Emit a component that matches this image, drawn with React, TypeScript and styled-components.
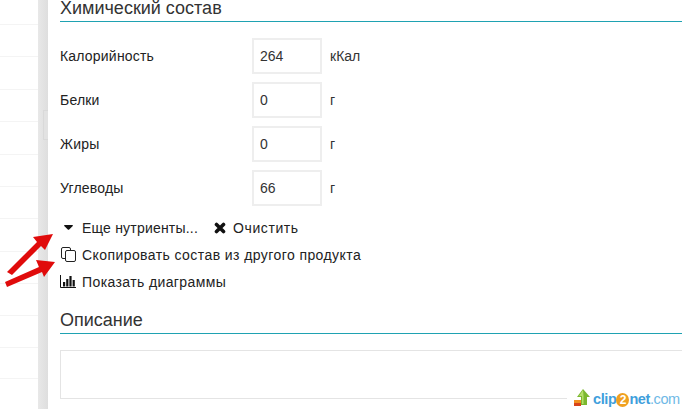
import React from 'react';
import styled, { createGlobalStyle } from 'styled-components';

const GlobalStyle = createGlobalStyle`
  html, body {
    margin: 0;
    padding: 0;
    background: #fff;
    overflow: hidden;
  }
  * { box-sizing: border-box; }
`;

const nutrients = [
  { label: 'Калорийность', value: '264', unit: 'кКал' },
  { label: 'Белки', value: '0', unit: 'г' },
  { label: 'Жиры', value: '0', unit: 'г' },
  { label: 'Углеводы', value: '66', unit: 'г' },
];

const sidebarRows = [25, 32, 33, 32, 33, 32, 32, 33, 32, 32, 32, 31];

const App = () => (
  <Page>
    <GlobalStyle />
    <Sidebar>
      {sidebarRows.map((height, i) => (
        <SidebarRow key={i} $height={height} />
      ))}
    </Sidebar>
    <Splitter>
      <Grip />
    </Splitter>
    <Main>
      <Heading>Химический состав</Heading>
      <Fields>
        {nutrients.map((n) => (
          <FieldRow key={n.label}>
            <FieldLabel>{n.label}</FieldLabel>
            <FieldInput readOnly value={n.value} />
            <Unit>{n.unit}</Unit>
          </FieldRow>
        ))}
      </Fields>
      <Actions>
        <ActionRow>
          <Action $tracking={0.2}>
            <IconSlot $width={22} $offset={4}>
              <svg width="9" height="5" viewBox="0 0 9 5">
                <path d="M0 0.5 Q0 0 1 0 H8 Q9 0 9 0.5 Q9 1 8 1.8 L5.2 4.6 Q4.5 5 3.8 4.6 L1 1.8 Q0 1 0 0.5Z" fill="#111" />
              </svg>
            </IconSlot>
            Еще нутриенты...
          </Action>
          <Action $tracking={0.6} $indent={16}>
            <IconSlot $width={19}>
              <svg width="12" height="12" viewBox="0 0 12 12">
                <path d="M2.5 2.5 L9.5 9.5 M9.5 2.5 L2.5 9.5" stroke="#111" strokeWidth="3.6" strokeLinecap="round" />
              </svg>
            </IconSlot>
            Очистить
          </Action>
        </ActionRow>
        <Action $tracking={0.42}>
          <IconSlot $width={22} $offset={1}>
            <svg width="15" height="15" viewBox="0 0 15 15" fill="none" stroke="#222" strokeWidth="1">
              <path d="M4.5 11.5 H2 Q0.5 11.5 0.5 10 V2 Q0.5 0.5 2 0.5 H8 Q9.5 0.5 9.5 2 V3.5" />
              <rect x="4.5" y="3.5" width="10" height="11" rx="1.5" fill="#fff" />
            </svg>
          </IconSlot>
          Скопировать состав из другого продукта
        </Action>
        <Action $tracking={0.39}>
          <IconSlot $width={22}>
            <svg width="16" height="13" viewBox="0 0 16 13">
              <path d="M0.5 0 V12.5 H16" fill="none" stroke="#111" strokeWidth="1" />
              <rect x="3" y="7" width="2.2" height="4.5" fill="#111" />
              <rect x="6.2" y="4" width="2.2" height="7.5" fill="#111" />
              <rect x="9.4" y="1" width="2.2" height="10.5" fill="#111" />
              <rect x="12.6" y="5" width="2.2" height="6.5" fill="#111" />
            </svg>
          </IconSlot>
          Показать диаграммы
        </Action>
      </Actions>
      <DescriptionHeading>Описание</DescriptionHeading>
      <DescriptionBox />
    </Main>

    <ArrowsOverlay width="70" height="70" viewBox="0 0 70 70">
      <path d="M7 44 L37 14 L33 9 L53 6 L45 22 L41 18 L12 47 Z" fill="#e00b0b" />
      <path d="M5 54 L39 39 L36 32 L55 34 L44 49 L42 44 L7 59 Z" fill="#e00b0b" />
    </ArrowsOverlay>

    <Watermark>
      <WatermarkIcon width="16" height="17" viewBox="0 0 16 17">
        <path d="M9 0 L16 8 H13 V16 H7 V8 H3 Z" fill="#7cb82f" />
        <path d="M9 1 L5 7 H8 V15 H9.5 V7 Z" fill="#b5e06a" />
        <rect x="0" y="11" width="7" height="3" fill="#f09020" />
        <rect x="0" y="14" width="7" height="3" fill="#d8431a" />
      </WatermarkIcon>
      <WatermarkText>
        clip<WatermarkTwo>2</WatermarkTwo>net<WatermarkDomain>.com</WatermarkDomain>
      </WatermarkText>
    </Watermark>
  </Page>
);

const Page = styled.div`
  position: relative;
  display: flex;
  width: 682px;
  height: 409px;
  overflow: hidden;
  background: #fff;
  font-family: 'Liberation Sans', Arial, sans-serif;
  font-size: 14px;
  color: #333;
`;

const Sidebar = styled.div`
  flex: 0 0 38px;
  display: flex;
  flex-direction: column;
`;

const SidebarRow = styled.div<{ $height: number }>`
  flex: 0 0 ${(p) => p.$height}px;
  border-bottom: 1px solid #f4f4f4;
`;

const Splitter = styled.div`
  flex: 0 0 10px;
  display: flex;
  justify-content: flex-end;
  align-items: flex-start;
  padding-top: 110px;
  background: linear-gradient(to right, #e8e8e8, #dedede);
`;

const Grip = styled.div`
  width: 5px;
  height: 30px;
  border: 1px solid #d9d9d9;
  border-right: 0;
  background: #e2e2e2;
`;

const Main = styled.div`
  flex: 1;
  min-width: 0;
  display: flex;
  flex-direction: column;
  padding-left: 12px;
`;

const Heading = styled.h2`
  margin: 0;
  height: 22px;
  font-size: 18px;
  font-weight: 400;
  line-height: 17px;
  color: #333;
  border-bottom: 1px solid #1fa2b2;
`;

const Fields = styled.div`
  display: flex;
  flex-direction: column;
  gap: 8px;
  padding-top: 16px;
`;

const FieldRow = styled.div`
  display: flex;
  align-items: center;
  height: 36px;
`;

const FieldLabel = styled.label`
  flex: 0 0 192px;
  color: #222;
  letter-spacing: 0.2px;
`;

const FieldInput = styled.input`
  width: 70px;
  height: 36px;
  padding: 0 6px;
  border: 2px solid #eeeeee;
  outline: none;
  font: inherit;
  color: #333;
  background: #fff;
`;

const Unit = styled.span`
  margin-left: 8px;
  color: #333;
`;

const Actions = styled.div`
  display: flex;
  flex-direction: column;
  padding-top: 8px;
`;

const ActionRow = styled.div`
  display: flex;
`;

const Action = styled.a<{ $tracking: number; $indent?: number }>`
  display: flex;
  align-items: center;
  height: 27px;
  margin-left: ${(p) => p.$indent ?? 0}px;
  letter-spacing: ${(p) => p.$tracking}px;
  color: #222;
  cursor: pointer;
`;

const IconSlot = styled.span<{ $width: number; $offset?: number }>`
  flex: 0 0 ${(p) => p.$width}px;
  display: flex;
  align-items: center;
  padding-left: ${(p) => p.$offset ?? 0}px;
`;

const DescriptionHeading = styled(Heading)`
  margin-top: 15px;
  height: 24px;
  line-height: 20px;
`;

const DescriptionBox = styled.div`
  height: 49px;
  margin-top: 16px;
  border: 1px solid #e4e4e4;
  border-right: 0;
`;

const ArrowsOverlay = styled.svg`
  position: absolute;
  left: 0;
  top: 228px;
`;

const Watermark = styled.div`
  position: absolute;
  left: 567px;
  right: 0;
  top: 389px;
  bottom: 0;
  display: flex;
  align-items: flex-start;
  gap: 3px;
  padding-left: 7px;
  background: #fff;
`;

const WatermarkIcon = styled.svg`
  flex: none;
`;

const WatermarkText = styled.span`
  white-space: nowrap;
  font-family: 'Liberation Sans', Arial, sans-serif;
  font-size: 14.5px;
  line-height: 20px;
  font-weight: 700;
  letter-spacing: -0.4px;
  color: #3f9fdc;
`;

const WatermarkTwo = styled.span`
  display: inline-block;
  width: 13px;
  height: 14px;
  line-height: 14px;
  border-radius: 50%;
  text-align: center;
  font-size: 12px;
  color: #fff;
  background: #f0a020;
`;

const WatermarkDomain = styled.span`
  font-weight: 400;
  color: #6fb9e6;
`;

export default App;
